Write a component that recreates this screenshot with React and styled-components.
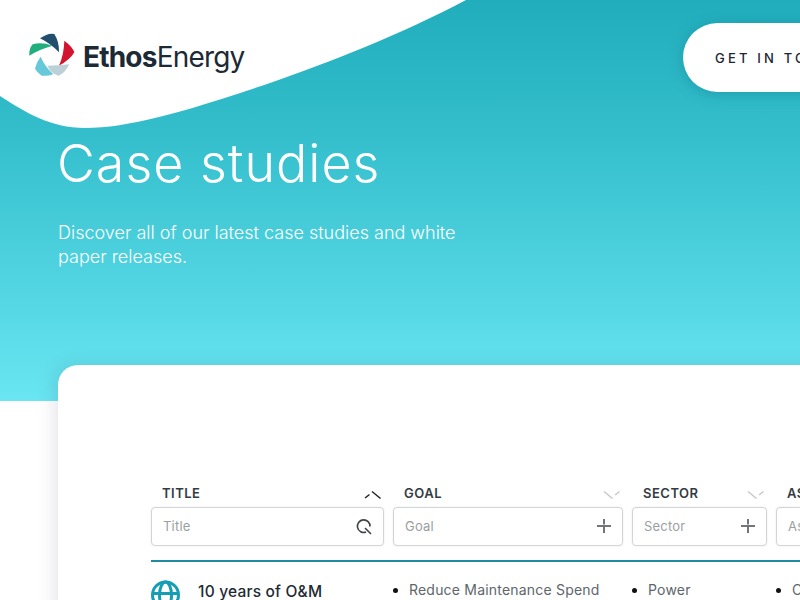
import React from 'react';
import styled, { createGlobalStyle } from 'styled-components';

const GlobalStyle = createGlobalStyle`
  html, body {
    margin: 0;
    padding: 0;
    background: #fff;
    overflow: hidden;
  }
  * { box-sizing: border-box; }
`;

const Page = styled.div`
  width: 800px;
  height: 600px;
  overflow: hidden;
  font-family: Inter, "Open Sans", sans-serif;
  color: #1d2a33;
`;
const Hero = styled.section`
  position: relative;
  height: 401px;
  padding-left: 58px;
  background: linear-gradient(180deg, #21adbc 0%, #35bfcd 35%, #69e6f2 100%);
`;
const Blob = styled.svg`
  position: absolute;
  left: 0;
  top: 0;
`;
const Header = styled.header`
  position: relative;
  display: flex;
  justify-content: space-between;
  align-items: flex-start;
  height: 133px;
  margin-left: -58px;
  padding: 23px 0 0 20px;
`;
const Logo = styled.div`
  display: flex;
  align-items: center;
  gap: 3px;
  height: 60px;
  margin-top: 2px;
`;
const LogoText = styled.div`
  font-size: 28px;
  letter-spacing: -0.8px;
  padding-top: 4px;
  color: #1b2a35;
  b { font-weight: 700; }
  span { font-weight: 400; }
`;
const ContactButton = styled.div`
  width: 190px;
  height: 69px;
  margin-right: -73px;
  padding-left: 32px;
  display: flex;
  align-items: center;
  background: #fff;
  border-radius: 35px;
  box-shadow: 0 2px 14px rgba(10, 110, 125, 0.35);
  font-size: 13px;
  font-weight: 500;
  letter-spacing: 3.2px;
  white-space: nowrap;
  color: #1c2533;
`;
const Heading = styled.h1`
  position: relative;
  margin: 0 0 0 -1px;
  font-size: 52px;
  line-height: 62px;
  font-weight: 350;
  letter-spacing: 1px;
  color: #fff;
`;
const Intro = styled.p`
  position: relative;
  width: 420px;
  margin: 26px 0 0;
  font-size: 18px;
  line-height: 24px;
  font-weight: 350;
  color: #fff;
`;
const Card = styled.main`
  position: relative;
  width: 900px;
  height: 400px;
  margin: -36px 0 0 58px;
  padding: 118px 0 0 93px;
  background: #fff;
  border-radius: 20px 0 0 0;
  box-shadow: -4px 0 18px rgba(60, 50, 90, 0.13);
`;
const Grid = styled.div`
  display: grid;
  grid-template-columns: 233px 230px 135px 135px;
  column-gap: 9px;
  width: 760px;
`;
const FilterHead = styled.div`
  display: flex;
  justify-content: space-between;
  align-items: flex-start;
  height: 24px;
  padding: 0 2px 0 11px;
  font-size: 13px;
  line-height: 20px;
  font-weight: 600;
  letter-spacing: 0.5px;
  color: #333c44;
`;
const ChevronSlot = styled.span`
  display: flex;
  padding-top: 7px;
`;
const FilterBox = styled.div`
  display: flex;
  justify-content: space-between;
  align-items: center;
  height: 39px;
  padding: 0 10px 1px 11px;
  border: 1.5px solid #d3d3d8;
  border-radius: 4px;
  box-shadow: 0 0 2px rgba(0, 0, 0, 0.1);
  font-size: 13px;
  letter-spacing: 0.2px;
  color: #9a9fa2;
  white-space: nowrap;
`;
const Rule = styled.div`
  width: 760px;
  height: 2px;
  margin-top: 14px;
  background: #1f8ba1;
`;
const Rows = styled(Grid)`
  padding-top: 18px;
`;
const TitleCell = styled.div`
  display: flex;
  gap: 18px;
  font-size: 15.5px;
  font-weight: 450;
  letter-spacing: 0.2px;
  line-height: 23px;
  color: #1d2a33;
`;
const Bullets = styled.ul`
  margin: 0;
  padding: 0 0 0 16px;
  font-size: 14px;
  letter-spacing: 0.2px;
  line-height: 20px;
  color: #5d666b;
  white-space: nowrap;
  li::marker { color: #111; }
`;

const Mark = () => (
  <svg width="60" height="60" viewBox="0 0 180 180">
    <path d="M60 40 Q85 22 103 27 Q118 50 117 82 Q92 56 60 40Z" fill="#234f6e" />
    <path d="M133 47 Q158 66 163 82 Q150 105 117 122 Q132 88 133 47Z" fill="#d3142f" />
    <path d="M82 122 Q115 122 148 118 Q135 145 115 152 Q92 145 82 122Z" fill="#bcd0d8" />
    <path d="M62 95 Q75 125 100 148 Q82 154 65 152 Q48 140 45 130 Q50 110 62 95Z" fill="#66c8d8" />
    <path d="M28 92 Q26 72 38 58 Q65 50 97 62 Q60 72 28 92Z" fill="#1fae7c" />
  </svg>
);

const Chevron = ({ up }) => (
  <svg width="18" height="10" viewBox="0 0 18 10">
    {up ? (
      <g stroke="#1f2428" strokeWidth="1.5" fill="none">
        <path d="M1 8 L5.5 4.5" />
        <path d="M8 1.5 L16.5 8.5" />
      </g>
    ) : (
      <g stroke="#c4c9cb" strokeWidth="1.5" fill="none">
        <path d="M1 1.5 L9.5 8.5" />
        <path d="M12 5 L16.5 1.5" />
      </g>
    )}
  </svg>
);

const SearchIcon = () => (
  <svg width="18" height="18" viewBox="0 0 18 18" fill="none" stroke="#3d4347" strokeWidth="1.6">
    <path d="M15 9.5 A6.3 6.3 0 1 0 11 15" />
    <path d="M10 11 L16 17" />
  </svg>
);

const PlusIcon = () => (
  <svg width="16" height="16" viewBox="0 0 16 16" fill="none" stroke="#4d5357" strokeWidth="1.6">
    <path d="M1 8 H15" />
    <path d="M8 1 V6.5" />
    <path d="M8 9 V15" />
  </svg>
);

const GlobeIcon = () => (
  <svg width="29" height="30" viewBox="0 0 29 30" fill="none" stroke="#159db4" strokeWidth="3" style={{ flex: 'none' }}>
    <circle cx="14.5" cy="15" r="13" />
    <ellipse cx="14.5" cy="15" rx="6" ry="13" />
    <path d="M2 13.5 H27 M2 22 H27" />
  </svg>
);

const filters = [
  { label: 'TITLE', placeholder: 'Title', up: true, icon: <SearchIcon /> },
  { label: 'GOAL', placeholder: 'Goal', icon: <PlusIcon /> },
  { label: 'SECTOR', placeholder: 'Sector', icon: <PlusIcon /> },
  { label: 'ASSET', placeholder: 'Asset', icon: <PlusIcon /> },
];

const App = () => (
  <Page>
    <GlobalStyle />
    <Hero>
      <Blob width="470" height="130" viewBox="0 0 470 130">
        <path
          d="M0 0 L466 0 C400 35 330 62 270 83 C190 110 130 128 85 128 C50 128 25 112 0 96Z"
          fill="#fff"
        />
      </Blob>
      <Header>
        <Logo>
          <Mark />
          <LogoText><b>Ethos</b><span>Energy</span></LogoText>
        </Logo>
        <ContactButton>GET IN TOUCH</ContactButton>
      </Header>
      <Heading>Case studies</Heading>
      <Intro>Discover all of our latest case studies and white paper releases.</Intro>
    </Hero>
    <Card>
      <Grid>
        {filters.map((f) => (
          <FilterHead key={f.label}>
            {f.label}
            <ChevronSlot><Chevron up={f.up} /></ChevronSlot>
          </FilterHead>
        ))}
        {filters.map((f) => (
          <FilterBox key={f.label}>
            {f.placeholder}
            {f.icon}
          </FilterBox>
        ))}
      </Grid>
      <Rule />
      <Rows>
        <TitleCell>
          <GlobeIcon />
          10 years of O&amp;M
        </TitleCell>
        <Bullets><li>Reduce Maintenance Spend</li></Bullets>
        <Bullets><li>Power</li></Bullets>
        <Bullets><li>Compressors</li></Bullets>
      </Rows>
    </Card>
  </Page>
);

export default App;
